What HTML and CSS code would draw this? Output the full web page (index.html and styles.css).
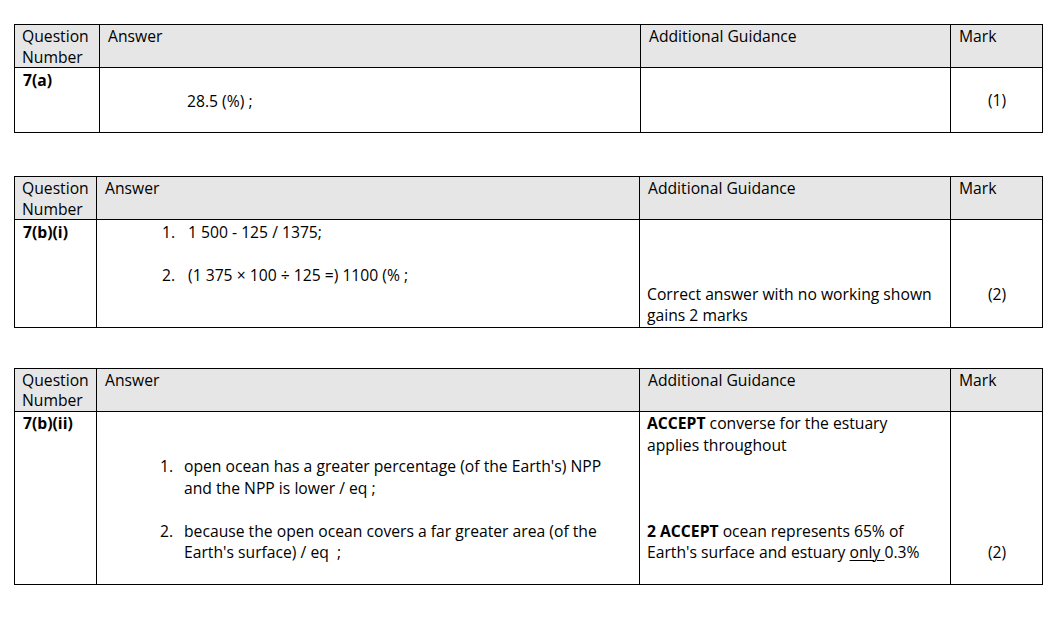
FILE: index.html
```html
<!DOCTYPE html>
<html>
<head>
<meta charset="utf-8">
<link rel="stylesheet" href="styles.css">
</head>
<body>
<div class="qtable t1">
  <div class="cell head">Question<br>Number</div>
  <div class="cell head">Answer</div>
  <div class="cell head">Additional Guidance</div>
  <div class="cell head">Mark</div>

  <div class="cell body qnum">7(a)</div>
  <div class="cell body answer"><div class="line">&nbsp;</div><div class="line single">28.5 (%) ;</div></div>
  <div class="cell body guide"></div>
  <div class="cell body mark">(1)</div>
</div>

<div class="qtable t2">
  <div class="cell head">Question<br>Number</div>
  <div class="cell head">Answer</div>
  <div class="cell head">Additional Guidance</div>
  <div class="cell head">Mark</div>

  <div class="cell body qnum">7(b)(i)</div>
  <div class="cell body answer">
    <ol class="steps s2">
      <li>1 500 - 125 / 1375;</li>
      <li>(1 375 × 100 ÷ 125 =) 1100 (% ;</li>
    </ol>
  </div>
  <div class="cell body guide bottom">Correct answer with no working shown<br>gains 2 marks</div>
  <div class="cell body mark">(2)</div>
</div>

<div class="qtable t3">
  <div class="cell head">Question<br>Number</div>
  <div class="cell head">Answer</div>
  <div class="cell head">Additional Guidance</div>
  <div class="cell head">Mark</div>

  <div class="cell body qnum">7(b)(ii)</div>
  <div class="cell body answer">
    <ol class="steps s3">
      <li>open ocean has a greater percentage (of the Earth's) NPP<br>and the NPP is lower / eq ;</li>
      <li>because the open ocean covers a far greater area (of the<br>Earth's surface) / eq&nbsp; ;</li>
    </ol>
  </div>
  <div class="cell body guide">
    <div><b>ACCEPT</b> converse for the estuary<br>applies throughout</div>
    <div class="gap3"><b>2 ACCEPT</b> ocean represents 65% of<br>Earth's surface and estuary <u>only </u>0.3%</div>
  </div>
  <div class="cell body mark">(2)</div>
</div>
</body>
</html>
```

FILE: styles.css
```css
html, body {
  margin: 0;
  background: #ffffff;
}
body {
  padding: 24px 0 0 14px;
  font-family: "Open Sans", "Liberation Sans", sans-serif;
  font-size: 15.7px;
  line-height: 21.5px;
  color: #000;
}
.qtable {
  display: grid;
  width: 1029px;
  box-sizing: border-box;
  border-top: 1px solid #000;
  border-left: 1px solid #000;
}
.t1 {
  grid-template-columns: 85px 541px 310px 92px;
}
.t2, .t3 {
  grid-template-columns: 82px 543px 311px 92px;
}
.t2 { margin-top: 43px; }
.t3 { margin-top: 40px; }
.cell {
  box-sizing: border-box;
  border-right: 1px solid #000;
  border-bottom: 1px solid #000;
  padding: 0 7px 0 8px;
}
.head {
  background: #e6e6e6;
  line-height: 20.5px;
  padding-top: 1px;
}
.head:first-child { padding-left: 7px; }
.body { padding-top: 1.5px; }
.qnum {
  font-weight: bold;
}
.t1 .answer {
  padding-left: 87px;
  min-height: 65px;
}
.guide { padding-left: 7px; }
.mark {
  text-align: center;
  align-self: stretch;
  display: flex;
  flex-direction: column;
  justify-content: flex-end;
  padding-bottom: 21.5px;
}
.t1 .mark { padding-bottom: 20.5px; }
.t3 .mark { padding-bottom: 20px; }
.guide.bottom {
  display: flex;
  flex-direction: column;
  justify-content: flex-end;
}
.t2 .guide { padding-top: 63.5px; }
.steps {
  margin: 0;
  padding: 0;
  list-style: none;
  counter-reset: step;
}
.steps li {
  counter-increment: step;
  position: relative;
}
.steps li::before {
  content: counter(step) ".";
  position: absolute;
}
.s2 { padding-left: 83px; }
.s2 li::before { left: -26px; }
.s2 li + li { margin-top: 21.5px; }
.s3 { padding-left: 79px; padding-top: 43px; }
.s3 li::before { left: -24px; }
.s3 li + li { margin-top: 21.5px; }
.gap3 { margin-top: 64.5px; }
.t3 .guide { padding-bottom: 20px; }
u { text-decoration-thickness: 1px; text-underline-offset: 2px; }
```
